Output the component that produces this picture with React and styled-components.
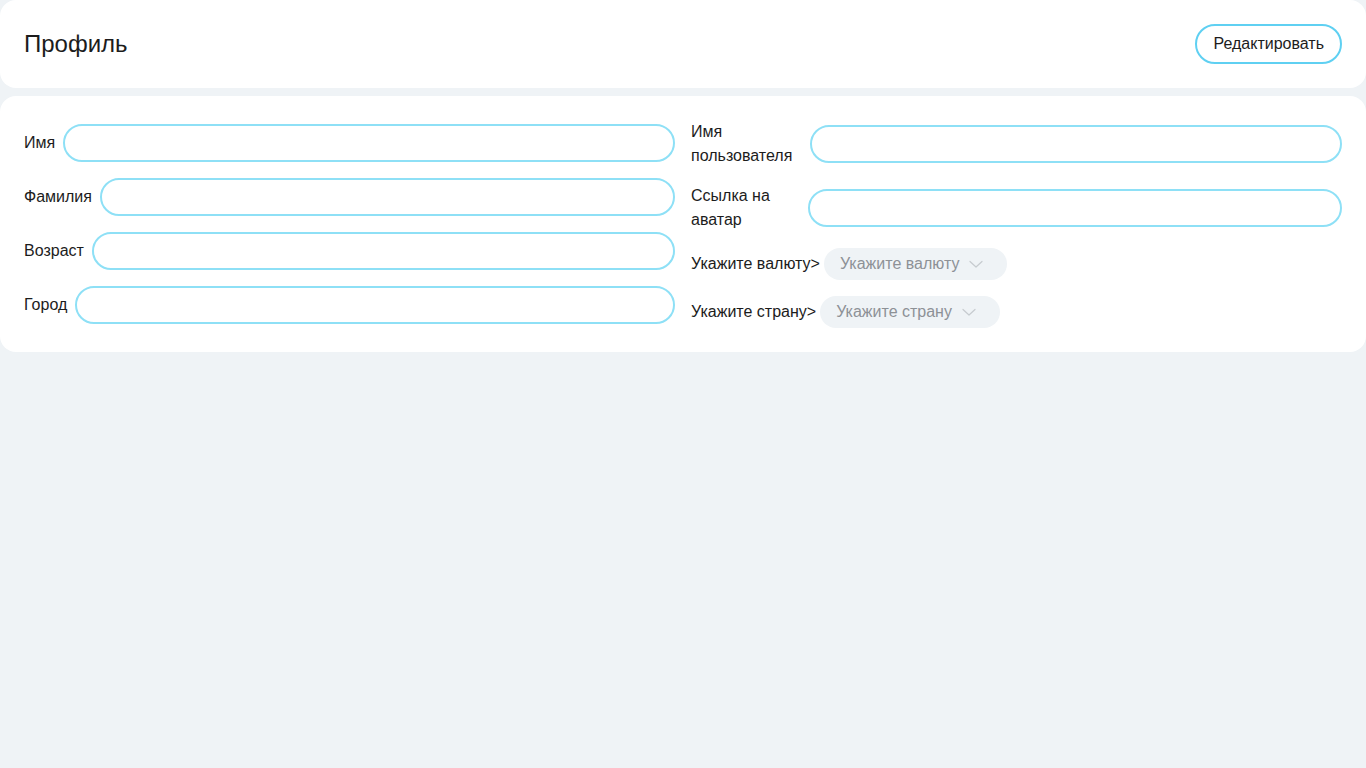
import React from "react";
import styled, { createGlobalStyle } from "styled-components";

const Global = createGlobalStyle`
  html, body { margin: 0; padding: 0; background: #eff3f6; }
  body { font-family: "Liberation Sans", Arial, sans-serif; color: #1c1c1c; }
  * { box-sizing: border-box; }
`;

const Page = styled.div`
  display: flex;
  flex-direction: column;
  gap: 8px;
  min-height: 768px;
  background: #eff3f6;
`;

const Card = styled.div`
  background: #ffffff;
  border-radius: 16px;
  padding: 24px;
`;

const Header = styled(Card)`
  display: flex;
  align-items: center;
  justify-content: space-between;
`;

const Title = styled.h1`
  margin: 0;
  font-size: 24px;
  font-weight: 400;
  line-height: 32px;
  color: #1c1c1c;
`;

const EditButton = styled.button`
  height: 40px;
  padding: 0 16px;
  border: 2px solid #5fd0f2;
  border-radius: 20px;
  background: #fff;
  font-family: inherit;
  font-size: 16px;
  color: #1c1c1c;
  cursor: pointer;
`;

const Body = styled(Card)`
  display: flex;
  align-items: center;
  gap: 16px;
`;

const Column = styled.div`
  flex: 1;
  display: flex;
  flex-direction: column;
  gap: 16px;
`;

const Row = styled.label`
  display: flex;
  align-items: center;
  gap: ${(p) => p.$gap || "8px"};
`;

const Label = styled.span`
  font-size: 16px;
  line-height: 24px;
  color: #1c1c1c;
  flex-shrink: 0;
  width: ${(p) => p.$w || "auto"};
`;

const Input = styled.input`
  flex: 1;
  min-width: 0;
  height: 38px;
  border: 2px solid #8ee0f6;
  border-radius: 19px;
  background: #fff;
  padding: 0 16px;
  font-family: inherit;
  font-size: 16px;
  outline: none;
`;

const Select = styled.div`
  display: flex;
  align-items: center;
  gap: 9px;
  height: 32px;
  padding: 0 23px 0 16px;
  border-radius: 16px;
  background: #eff3f6;
  color: #8d9196;
  font-size: 16px;
`;

const Chevron = () => (
  <svg width="16" height="16" viewBox="0 0 16 16" fill="none">
    <path d="M2 5.5 L8 11 L14 5.5" stroke="#c6cbcf" strokeWidth="1.2" strokeLinecap="round" strokeLinejoin="round" />
  </svg>
);

export default function App() {
  return (
    <Page>
      <Global />
      <Header>
        <Title>Профиль</Title>
        <EditButton>Редактировать</EditButton>
      </Header>
      <Body>
        <Column>
          <Row><Label>Имя</Label><Input /></Row>
          <Row><Label>Фамилия</Label><Input /></Row>
          <Row><Label>Возраст</Label><Input /></Row>
          <Row><Label>Город</Label><Input /></Row>
        </Column>
        <Column>
          <Row><Label $w="111px">Имя пользователя</Label><Input /></Row>
          <Row><Label $w="109px">Ссылка на аватар</Label><Input /></Row>
          <Row $gap="4px">
            <Label>Укажите валюту&gt;</Label>
            <Select>Укажите валюту<Chevron /></Select>
          </Row>
          <Row $gap="4px">
            <Label>Укажите страну&gt;</Label>
            <Select>Укажите страну<Chevron /></Select>
          </Row>
        </Column>
      </Body>
    </Page>
  );
}
